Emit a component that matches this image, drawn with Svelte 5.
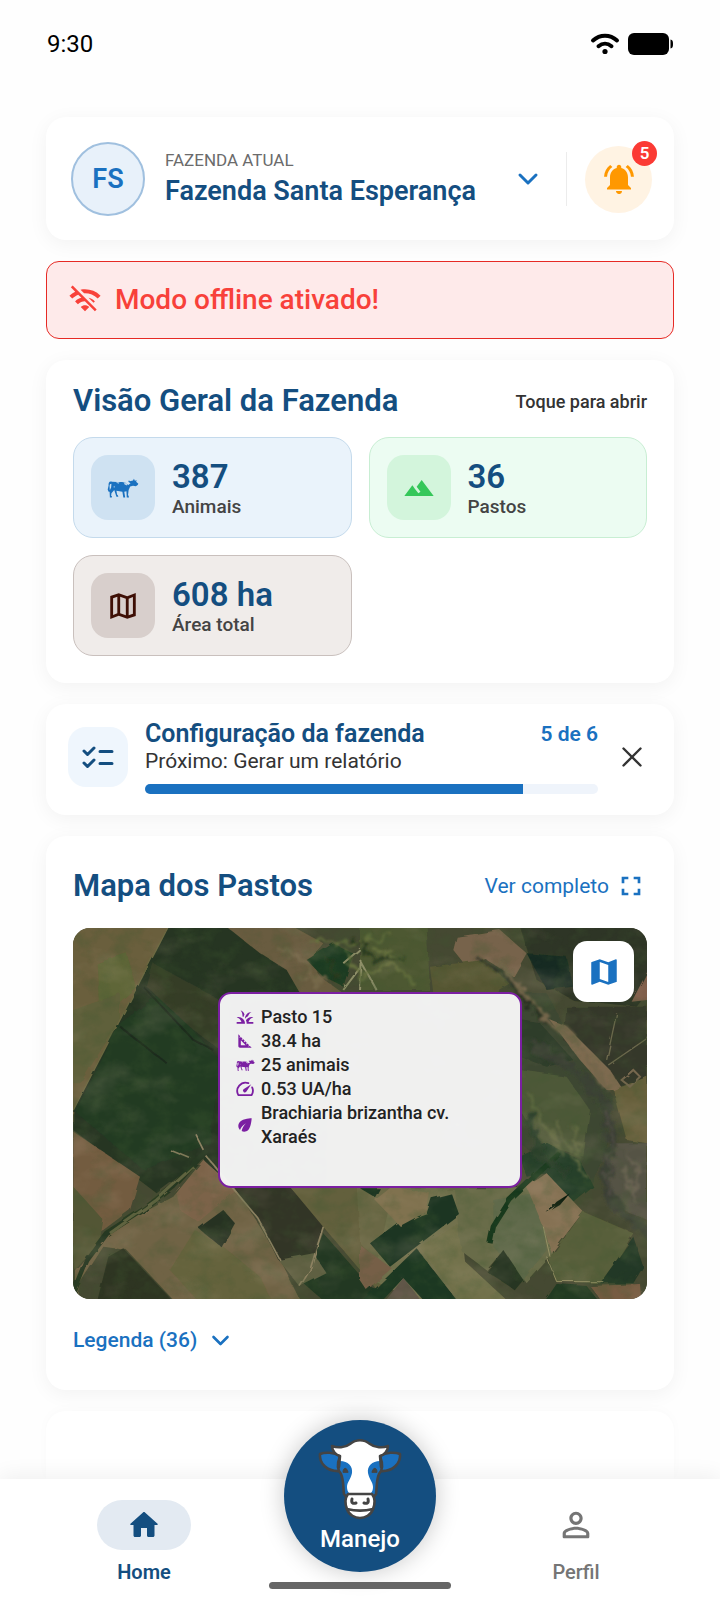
<script>
  const stats = [
    { id: 'animais', value: '387', label: 'Animais' },
    { id: 'pastos', value: '36', label: 'Pastos' },
    { id: 'area', value: '608 ha', label: 'Área total' }
  ];
  const done = 5;
  const total = 6;
  const pasture = [
    { icon: 'grass', text: 'Pasto 15' },
    { icon: 'square', text: '38.4 ha' },
    { icon: 'cow', text: '25 animais' },
    { icon: 'gauge', text: '0.53 UA/ha' },
    { icon: 'leaf', text: 'Brachiaria brizantha cv. Xaraés' }
  ];
</script>

{#snippet cow(w, h)}
  <svg width={w} height={h} viewBox="0 0 100 64" fill="currentColor" aria-hidden="true">
    <path d="M15 12C6 9 3 15 4 24L1 37l3 7 4-1-1-17c0-6 2-8 6-8l-1 12-5 11 1 21h6l1-3-3-2 1-8 9-11 3 10 4 12h6l-1-4-3-3-2-12 19 3 3 18h6l-1-6-2-12 7-2 1 20h7l-1-5-2-2 2-17 5-11 9-2 9 1 6-4 2-4-7-6 2-5-6 2-3-7-3 6-10 2-3-3-2 5 7 5-7 5-9-7-11-2H31z"/>
    <path d="M27 13l8 5 4-4zM53 14l2 7 8 3 1-6zM23 25l-4 4 4 2z" fill="#fff" fill-opacity=".7"/>
  </svg>
{/snippet}

{#snippet chevron()}
  <svg width="24" height="24" viewBox="0 0 24 24" fill="none" stroke="currentColor" stroke-width="3" stroke-linecap="round" stroke-linejoin="round" aria-hidden="true">
    <path d="M4 8l8 8 8-8"/>
  </svg>
{/snippet}

<div class="screen">
  <header class="status">
    <span>9:30</span>
    <div class="status-icons">
      <svg width="30" height="24" viewBox="0 0 30 24" fill="none" stroke="#000" stroke-width="4" stroke-linecap="round" aria-hidden="true">
        <path d="M3 8.500C10 2 20 2 27 8.500M8.500 14.200c4-3.400 9-3.400 13 0"/>
        <circle cx="15" cy="19.500" r="2.600" fill="#000" stroke="none"/>
      </svg>
      <svg width="46" height="24" viewBox="0 0 46 24" aria-hidden="true">
        <rect y="1" width="41" height="22" rx="6"/>
        <path d="M42.500 7.500c2 .4 2.500 1.500 2.500 4.500s-.5 4.100-2.500 4.500z"/>
      </svg>
    </div>
  </header>

  <main>
    <section class="card farm">
      <div class="avatar">FS</div>
      <button class="farm-select">
        <span class="farm-text">
          <small>FAZENDA ATUAL</small>
          <strong>Fazenda Santa Esperança</strong>
        </span>
        {@render chevron()}
      </button>
      <button class="bell" aria-label="Notificações">
        <svg width="36" height="36" viewBox="0 0 24 24" fill="#ff9800" aria-hidden="true">
          <path d="M7.580 4.080L6.150 2.650C3.750 4.480 2.170 7.300 2.030 10.500h2c.15-2.650 1.510-4.970 3.550-6.420zm12.390 6.420h2c-.15-3.200-1.730-6.020-4.120-7.850l-1.420 1.430c2.020 1.450 3.390 3.770 3.540 6.420zM18 11c0-3.070-1.640-5.640-4.500-6.320V4c0-.83-.67-1.500-1.500-1.500s-1.500.67-1.500 1.500v.68C7.630 5.360 6 7.920 6 11v5l-2 2v1h16v-1l-2-2v-5zm-6 11c.14 0 .27-.01.4-.04.65-.14 1.180-.58 1.440-1.180.1-.24.15-.5.15-.78h-4c.01 1.100.9 2 2.010 2z"/>
        </svg>
        <span class="badge">5</span>
      </button>
    </section>

    <div class="offline" role="status">
      <svg width="34" height="34" viewBox="0 0 24 24" fill="currentColor" aria-hidden="true">
        <path d="M22.990 9C19.150 5.160 13.800 3.760 8.840 4.780l2.520 2.520c3.470-.17 6.990 1.050 9.630 3.700l2-2zm-4 4c-1.290-1.290-2.840-2.130-4.490-2.560l3.530 3.530.96-.97zM2 3.050L5.070 6.100C3.600 6.820 2.220 7.780 1 9l1.990 2c1.240-1.240 2.670-2.160 4.200-2.770l2.240 2.240C7.810 10.890 6.270 11.730 5 13v.01L6.990 15c1.360-1.360 3.140-2.040 4.920-2.060L18.980 20l1.270-1.260L3.290 1.790 2 3.050zM9 17l3 3 3-3c-1.650-1.660-4.340-1.660-6 0z"/>
      </svg>
      <span>Modo offline ativado!</span>
    </div>

    <section class="card overview">
      <div class="heading">
        <h2>Visão Geral da Fazenda</h2>
        <span class="hint">Toque para abrir</span>
      </div>
      <div class="tiles">
        {#each stats as s}
          <button class="tile {s.id}">
            <span class="tile-icon">
              {#if s.id === 'animais'}
                {@render cow(32, 20)}
              {:else if s.id === 'pastos'}
                <svg width="32" height="32" viewBox="0 0 24 24" fill="currentColor" aria-hidden="true">
                  <path d="M14 6l-3.750 5 2.850 3.800-1.600 1.200C9.810 13.750 7 10 7 10l-6 8h22L14 6z"/>
                </svg>
              {:else}
                <svg width="34" height="34" viewBox="0 0 24 24" fill="currentColor" aria-hidden="true">
                  <path fill-rule="evenodd" d="M15 5.100L9 3 3 5.020V21.200l6-2.300 6 2.100 6-2.020V2.800zM10 5.470l4 1.400v11.660l-4-1.400zM5 6.460l3-1.010v11.700l-3 1.160zM19 17.540l-3 1.010V6.860l3-1.160z"/>
                </svg>
              {/if}
            </span>
            <span class="tile-text">
              <strong>{s.value}</strong>
              <span>{s.label}</span>
            </span>
          </button>
        {/each}
      </div>
    </section>

    <section class="card setup">
      <div class="setup-icon">
        <svg width="32" height="24" viewBox="0 0 32 24" fill="none" stroke="#144e80" stroke-width="3" stroke-linecap="round" stroke-linejoin="round" aria-hidden="true">
          <path d="M2 6l3.500 3.500L12 3M2 18l3.500 3.500L12 15M18 6.500h12M18 18.500h12"/>
        </svg>
      </div>
      <div class="setup-body">
        <div class="setup-head">
          <h3>Configuração da fazenda</h3>
          <span>{done} de {total}</span>
        </div>
        <p>Próximo: Gerar um relatório</p>
        <div class="track" role="progressbar" aria-label="Configuração da fazenda" aria-valuenow={done} aria-valuemin="0" aria-valuemax={total}>
          <div class="fill" style="width: {(done / total) * 100}%"></div>
        </div>
      </div>
      <button class="close" aria-label="Fechar">
        <svg width="20" height="20" viewBox="0 0 20 20" stroke="#333" stroke-width="2.400" stroke-linecap="round" aria-hidden="true">
          <path d="M1.500 1.500l17 17M18.500 1.500l-17 17"/>
        </svg>
      </button>
    </section>

    <section class="card map-card">
      <div class="heading">
        <h2>Mapa dos Pastos</h2>
        <button class="link">
          Ver completo
          <svg width="32" height="32" viewBox="0 0 24 24" fill="currentColor" aria-hidden="true">
            <path d="M7 14H5v5h5v-2H7v-3zm-2-4h2V7h3V5H5v5zm12 7h-3v2h5v-5h-2v3zM14 5v2h3v3h2V5h-5z"/>
          </svg>
        </button>
      </div>

      <div class="map">
        <svg class="terrain" viewBox="0 0 574 371" preserveAspectRatio="xMidYMid slice" aria-hidden="true">
          <defs>
            <filter id="rough" x="0" y="0" width="100%" height="100%">
              <feTurbulence type="fractalNoise" baseFrequency=".06" numOctaves="3" seed="4" result="n"/>
              <feDisplacementMap in="SourceGraphic" in2="n" scale="4"/>
              <feGaussianBlur stdDeviation=".5"/>
            </filter>
            <filter id="wild" x="-10%" y="-10%" width="120%" height="120%">
              <feTurbulence type="fractalNoise" baseFrequency=".09" numOctaves="4" seed="9" result="n"/>
              <feDisplacementMap in="SourceGraphic" in2="n" scale="18" xChannelSelector="R" yChannelSelector="G"/>
              <feGaussianBlur stdDeviation=".8"/>
            </filter>
            <filter id="mottle" x="0" y="0" width="100%" height="100%">
              <feTurbulence type="fractalNoise" baseFrequency=".05 .06" numOctaves="5" seed="12"/>
              <feColorMatrix values="0 0 0 0 .05  0 0 0 0 .1  0 0 0 0 .03  2.600 0 0 0 -1.150"/>
            </filter>
            <filter id="glow" x="0" y="0" width="100%" height="100%">
              <feTurbulence type="fractalNoise" baseFrequency=".02 .03" numOctaves="4" seed="31"/>
              <feColorMatrix values="0 0 0 0 .62  0 0 0 0 .46  0 0 0 0 .34  0 2.200 0 0 -1.050"/>
            </filter>
          </defs>
          <rect width="574" height="371" fill="#474b2e"/>
          <g filter="url(#rough)">
            <rect width="574" height="371" fill="#454930"/>
            <!-- west side fields -->
            <g transform="translate(-13 -18) scale(.3333)">
              <path d="M20 40H330L190 350 40 610H20z" fill="#6b5f3c"/>
              <path d="M110 160L200 130 230 230 120 330z" fill="#5e6638"/>
              <path d="M40 300L180 250 180 330 60 520H40z" fill="#5f613a"/>
              <path d="M325 50H510L590 120 700 170 800 250V840H480L430 745 290 850 40 660V600z" fill="#263523"/>
              <path d="M180 340L45 605 250 780 450 700 480 450 300 250z" fill="#223a24"/>
              <path d="M280 160L480 270V420L400 360 260 230z" fill="#343c28"/>
              <path d="M500 50H700L790 100 750 150 780 200 850 250H720L680 180 600 130z" fill="#695c3f"/>
              <path d="M740 150L820 100 880 130 850 230 790 200z" fill="#1c3b20"/>
              <path d="M40 665L240 800 210 900 130 960 40 1000z" fill="#735c40"/>
              <path d="M40 830L130 930 120 990 40 1080z" fill="#525734"/>
              <path d="M430 750L530 840 600 950 660 1050 720 1170H340L200 1020 130 1010 60 1120 45 1180V1080L150 960 340 860z" fill="#706344"/>
              <path d="M430 750L530 840 415 935 360 900 350 850z" fill="#7c6449"/>
              <path d="M190 1015L345 1180H110L145 1040z" fill="#2d3624"/>
              <path d="M405 960L490 1010 600 1100 640 1180H420L330 1080z" fill="#65633e"/>
              <path d="M490 900L525 940 485 1012 415 955z" fill="#253223"/>
              <path d="M520 830H690L790 950 740 1080 655 1050 590 920z" fill="#323627"/>
              <path d="M690 830H900L960 870V1000L930 1010 960 1080V1150L790 950z" fill="#64603c"/>
              <path d="M790 970L930 1130 960 1140V1180H800L730 1120z" fill="#203822"/>
              <path d="M655 1050L760 1030 800 1090 720 1130z" fill="#5e6042"/>
              <path d="M40 1150L80 1050 140 970 250 900 340 830 440 720" fill="none" stroke="#283820" stroke-width="17"/>
              <path d="M150 970L290 870 400 770" fill="none" stroke="#60633f" stroke-width="9"/>
              <path d="M40 600L325 50" fill="none" stroke="#6b6841" stroke-width="4"/>
              <path d="M440 740L590 920 660 1050M790 950L750 1080 720 1130M330 720L390 745M405 670L430 720" fill="none" stroke="#8b8060" stroke-width="5"/>
              <path d="M180 350L320 460M255 235L400 390 460 420" fill="none" stroke="#1d2c1d" stroke-width="6"/>
              <path d="M850 240L910 160 950 240M850 160L920 100" fill="none" stroke="#90906b" stroke-width="6"/>
            </g>
            <!-- east side fields -->
            <g transform="translate(287 -18) scale(.3333)">
              <path d="M0 50H200L210 240H0z" fill="#4d5833"/>
              <path d="M290 80L420 60 500 130 460 200 380 150 320 170 280 120z" fill="#77644b"/>
              <path d="M210 170L370 150 450 220 400 250H220z" fill="#555733"/>
              <path d="M480 50H862V250L830 290 640 270 530 210z" fill="#2e3626"/>
              <path d="M500 130L620 140 640 230 560 240z" fill="#172c20"/>
              <path d="M862 185V270L815 275z" fill="#805f4b"/>
              <path d="M480 250H560L640 400 760 560 740 720 690 830 560 760 480 700z" fill="#3d4631"/>
              <path d="M620 290H862V520L760 530 700 450 610 390z" fill="#363829"/>
              <path d="M480 480L620 500 690 600 670 740 540 700 480 600z" fill="#4d5938"/>
              <path d="M480 330L540 340 640 450 560 470 480 440z" fill="#2d3d2a"/>
              <path d="M570 330L620 350 700 430 750 480 790 540 740 540 660 450z" fill="#7d6a50"/>
              <path d="M760 540L862 500V700L800 690z" fill="#665f3a"/>
              <path d="M750 700H862V930L790 900 740 830z" fill="#555245"/>
              <path d="M480 740L560 700 660 750 700 830 640 880 560 790 500 800z" fill="#25402a"/>
              <path d="M-10 830H300V960L200 1000 100 1100 0 1000z" fill="#6a6845"/>
              <path d="M100 830L290 840 330 1180H180L40 1110z" fill="#72714d"/>
              <path d="M285 835H480L550 800 600 860 560 950 580 1030 500 1120 430 1020 380 1080 300 1020z" fill="#696c4a"/>
              <path d="M400 870L520 850 550 960 560 1020 490 1110 400 1010z" fill="#606a4b"/>
              <path d="M500 830L560 790 670 905 575 1030 550 950z" fill="#857153"/>
              <path d="M580 1030L670 905 820 970 730 1120 590 1115 565 1040z" fill="#595e3a"/>
              <path d="M180 1010L290 940 310 1050 440 1170H300z" fill="#707048"/>
              <path d="M30 1000L110 940 200 910 215 865 275 850 297 912 90 1070z" fill="#1c3622"/>
              <path d="M45 870L95 830 210 850 200 905 120 948z" fill="#807250"/>
              <path d="M0 1180L170 1015 290 1170H190L130 1105 60 1180z" fill="#1e3723"/>
              <path d="M70 1180L130 1105 190 1180z" fill="#5f5546"/>
              <path d="M0 1005L95 1075 20 1140 0 1110z" fill="#765f47"/>
              <path d="M0 835H60L45 862z" fill="#1c3520"/>
              <path d="M430 1020L490 1110 465 1140 380 1085z" fill="#273622"/>
              <path d="M820 980L850 1070 820 1120H720z" fill="#223825"/>
              <path d="M550 1180L590 1122 680 1128 720 1180z" fill="#203a23"/>
              <path d="M690 1128L840 1122 845 1180H730z" fill="#775c43"/>
              <path d="M560 908L590 875 630 850 600 885z" fill="#0d1d10"/>
              <path d="M390 1000L400 950 450 870 540 785 600 730" fill="none" stroke="#19371b" stroke-width="16"/>
              <path d="M560 1040L590 1115H730M550 950L570 1040" fill="none" stroke="#989366" stroke-width="3"/>
              <path d="M745 465L862 385M740 450L770 310" fill="none" stroke="#6c694d" stroke-width="4"/>
              <path d="M0 150L50 240M5 160L0 240" fill="none" stroke="#90906b" stroke-width="6"/>
              <path d="M785 510L820 480 840 500 810 530z" fill="none" stroke="#77684f" stroke-width="6"/>
            </g>
          </g>
          <!-- river bed and its woods -->
          <g filter="url(#wild)" fill="none" stroke-linecap="round">
            <path d="M428 36C445 60 462 85 482 96S520 135 532 160" stroke="#74664c" stroke-width="5"/>
            <path d="M405 33C430 35 440 65 470 92" stroke="#262f23" stroke-width="3"/>
            <path d="M465 120C500 140 540 165 538 205S525 262 545 280 574 300 576 310" stroke="#3b3f36" stroke-width="10"/>
            <path d="M533 180C545 205 530 240 537 268" stroke="#4e4b43" stroke-width="3"/>
            <path d="M455 165l15 30 20 30M480 195l20 30 10 25M500 200l8 30" stroke="#626b43" stroke-width="3"/>
            <path d="M458 190l8 40 26 14" stroke="#2a4029" stroke-width="7"/>
            <path d="M270 25l20 25 30-15 20 20M240 12l35 5 40-8M300 20l30 12" stroke="#65703d" stroke-width="3"/>
            <path d="M280 10l20 20 30 0M255 30l10 20" stroke="#27381f" stroke-width="3"/>
            <path d="M205 20l30 15 10 25M225 50l25 0" stroke="#75674a" stroke-width="4"/>
            <path d="M555 225l12 20-8 20M550 240l14 36" stroke="#6a6453" stroke-width="3"/>
          </g>
          <rect width="574" height="371" filter="url(#mottle)" opacity=".3"/>
          <rect width="574" height="371" filter="url(#glow)" opacity=".18"/>
        </svg>

        <button class="layers" aria-label="Camadas do mapa">
          <svg width="34" height="34" viewBox="0 0 24 24" fill="#1a71c0" aria-hidden="true">
            <path fill-rule="evenodd" d="M20.500 3l-.16.030L15 5.100 9 3 3.360 4.900c-.21.070-.36.250-.36.480V20.500c0 .28.220.5.5.5l.16-.03L9 18.900l6 2.100 5.640-1.900c.21-.07.36-.25.36-.48V3.500c0-.28-.22-.5-.5-.5zM15 19l-6-2.110V5l6 2.110z"/>
          </svg>
        </button>

        <ul class="popup">
          {#each pasture as p}
            <li>
              <span class="row-icon">
                {#if p.icon === 'grass'}
                  <svg width="20" height="20" viewBox="0 0 24 24" fill="currentColor" aria-hidden="true">
                    <path d="M12 20H2v-2h5.750C7.020 15.190 4.810 12.990 2 12.260 2.640 12.100 3.310 12 4 12c4.420 0 8 3.580 8 8zm10-7.740c-.64-.16-1.310-.26-2-.26-2.930 0-5.480 1.580-6.880 3.930.29.66.53 1.350.67 2.070.13.650.2 1.320.2 2h8v-2h-5.750c.74-2.810 2.950-5.010 5.760-5.740zM15.640 11.020c.78-2.090 2.230-3.840 4.090-5C15.440 6.160 12 9.670 12 14v.02c.95-1.270 2.200-2.300 3.640-3zM11.420 8.850C10.580 6.660 8.880 4.890 6.700 4 8.140 5.860 9 8.180 9 10.710c0 .21-.03.410-.04.610.43.240.83.520 1.220.82.210-1.180.65-2.290 1.240-3.290z"/>
                  </svg>
                {:else if p.icon === 'square'}
                  <svg width="20" height="20" viewBox="0 0 24 24" fill="currentColor" aria-hidden="true">
                    <path fill-rule="evenodd" d="M17.660 17.660l-1.060 1.060-.71-.71 1.060-1.060-1.940-1.940-1.060 1.060-.71-.71 1.060-1.060-1.940-1.940-1.060 1.060-.71-.71 1.060-1.060L9.700 9.700l-1.060 1.060-.71-.71 1.060-1.060-1.940-1.940-1.060 1.060-.71-.71 1.060-1.060L4 4v14c0 1.100.9 2 2 2h14zM7 17v-5.760L12.760 17z"/>
                  </svg>
                {:else if p.icon === 'cow'}
                  {@render cow(19, 12)}
                {:else if p.icon === 'gauge'}
                  <svg width="20" height="20" viewBox="0 0 24 24" fill="none" stroke="currentColor" stroke-width="2.200" stroke-linecap="round" stroke-linejoin="round" aria-hidden="true">
                    <path d="M16 5a10 10 0 0 0-12 14.300h16a10 10 0 0 0 .6-9.300"/>
                    <path d="M19.500 6.300l-9.300 6a2.200 2.200 0 1 0 3.300 3z" fill="currentColor" stroke="none"/>
                  </svg>
                {:else}
                  <svg width="20" height="20" viewBox="0 0 24 24" fill="currentColor" aria-hidden="true">
                    <path d="M6.050 8.050c-2.730 2.730-2.730 7.150-.02 9.880 1.470-3.400 4.090-6.240 7.360-7.930-2.770 2.340-4.710 5.610-5.390 9.320 2.600 1.230 5.800.78 7.950-1.370C19.430 14.470 20 4 20 4S9.530 4.570 6.050 8.050z"/>
                  </svg>
                {/if}
              </span>
              <span>{p.text}</span>
            </li>
          {/each}
        </ul>
      </div>

      <button class="legend">
        Legenda (36)
        {@render chevron()}
      </button>
    </section>

    <section class="card next"></section>
  </main>

  <nav>
    <a class="tab active" href="#home">
      <span class="pill">
        <svg width="36" height="36" viewBox="0 0 24 24" fill="currentColor" aria-hidden="true">
          <path d="M10 19v-5h4v5c0 .55.450 1 1 1h3c.55 0 1-.45 1-1v-7h1.700c.46 0 .68-.57.33-.87L12.670 3.600c-.38-.34-.96-.34-1.340 0l-8.360 7.530c-.34.300-.13.870.33.870H5v7c0 .55.450 1 1 1h3c.55 0 1-.45 1-1z"/>
        </svg>
      </span>
      Home
    </a>
    <a class="manejo" href="#manejo">
      <svg width="88" height="82" viewBox="0 0 88 82" stroke="#444" stroke-width="2.600" stroke-linejoin="round" stroke-linecap="round" aria-hidden="true">
        <path d="M24 17C18 13 9 13 4 15c-1 9 7 18 20 17zM64 17c6-4 15-4 20-2 1 9-7 18-20 17z" fill="#1a71c0"/>
        <path d="M24 17c-3 8-3 14 1 18 3 7 2 14 3 20l4 5h24l4-5c1-6 0-13 3-20 4-4 4-10 1-18z" fill="#1a71c0"/>
        <path d="M24 16c-4-1-8-4-8-9 5 2 13 2 18-2 6-5 14-5 20 0 5 4 13 4 18 2 0 5-4 8-8 9v6c-8 0-13 5-12 12 1 6 5 9 5 14 0 3-1 5-2 6H33c-1-1-2-3-2-6 0-5 4-8 5-14 1-7-4-12-12-12z" fill="#fff" stroke="none"/>
        <path d="M23 28l1-11c-4-1-8-5-8-10 5 2 13 2 18-2 6-5 14-5 20 0 5 4 13 4 18 2 0 5-4 9-8 10l1 11" fill="none"/>
        <path d="M27 33c0-5 4-5 5 0zM56 33c1-5 5-5 5 0z" fill="#444" stroke-width="1"/>
        <path d="M31 70c2 6 8 9 13 9s11-3 13-9z" fill="#fff"/>
        <path d="M32 55h24c3 4 3 10 1 15-8 2-18 2-26 0-2-5-2-11 1-15z" fill="#fff"/>
        <path d="M36 60c-1 4 1 5 4 4M52 60c1 4-1 5-4 4" fill="none" stroke-width="3"/>
      </svg>
      Manejo
    </a>
    <a class="tab" href="#perfil">
      <span class="pill">
        <svg width="40" height="40" viewBox="0 0 24 24" fill="currentColor" aria-hidden="true">
          <path d="M12 5.900c1.160 0 2.100.94 2.100 2.100s-.94 2.100-2.100 2.100S9.900 9.160 9.900 8s.94-2.100 2.100-2.100m0 9c2.970 0 6.100 1.460 6.100 2.100v1.100H5.900V17c0-.64 3.130-2.100 6.100-2.100M12 4C9.790 4 8 5.790 8 8s1.790 4 4 4 4-1.790 4-4-1.790-4-4-4zm0 9c-2.670 0-8 1.340-8 4v2c0 .6.400 1 1 1h14c.6 0 1-.4 1-1v-2c0-2.660-5.330-4-8-4z"/>
        </svg>
      </span>
      Perfil
    </a>
    <span class="grip"></span>
  </nav>
</div>

<style>
  :global(body) {
    background: #fefefe;
    font-family: Roboto, "Liberation Sans", sans-serif;
    color: #333;
  }
  button {
    font: inherit;
    color: inherit;
    background: none;
    border: 0;
    padding: 0;
    text-align: left;
    cursor: pointer;
  }
  h2, h3, p, ul { margin: 0; padding: 0; }
  svg { display: block; flex: none; }

  .screen {
    display: flex;
    flex-direction: column;
    min-height: 100vh;
  }
  .status {
    display: flex;
    align-items: center;
    justify-content: space-between;
    height: 88px;
    padding: 0 46px 0 47px;
    font-size: 24px;
    color: #000;
  }
  .status-icons { display: flex; gap: 8px; }

  main {
    flex: 1;
    display: flex;
    flex-direction: column;
    gap: 21px;
    padding: 29px 46px 0;
  }
  .card {
    background: #fff;
    border-radius: 20px;
    box-shadow: 0 4px 20px rgba(0, 0, 0, .05);
  }

  .farm {
    display: flex;
    align-items: center;
    padding: 25px 22px 24px 25px;
  }
  .avatar {
    box-sizing: border-box;
    width: 74px;
    height: 74px;
    border: 2px solid #a0c0df;
    border-radius: 50%;
    background: #e8f1fa;
    color: #1a71c0;
    font-size: 27px;
    font-weight: 600;
    line-height: 70px;
    text-align: center;
  }
  .farm-select {
    flex: 1;
    display: flex;
    align-items: center;
    justify-content: space-between;
    margin-left: 20px;
    padding-right: 27px;
    color: #1a71c0;
  }
  .farm-text { display: flex; flex-direction: column; }
  .farm-text small {
    font-size: 17px;
    line-height: 24px;
    color: #6b6b6b;
  }
  .farm-text strong {
    font-size: 27px;
    font-weight: 600;
    line-height: 38px;
    color: #144e80;
  }
  .bell {
    position: relative;
    display: grid;
    place-items: center;
    width: 67px;
    height: 67px;
    margin-left: 18px;
    border-radius: 50%;
    background: #fff3e3;
  }
  .bell::before {
    content: "";
    position: absolute;
    left: -19px;
    top: 6px;
    width: 1px;
    height: 54px;
    background: #ececec;
  }
  .badge {
    position: absolute;
    top: -5px;
    right: -5px;
    width: 25px;
    height: 25px;
    border-radius: 50%;
    background: #fb3a34;
    color: #fff;
    font-size: 17px;
    font-weight: 600;
    line-height: 25px;
    text-align: center;
  }

  .offline {
    display: flex;
    align-items: center;
    gap: 13px;
    padding: 21px;
    border: 1px solid #e62a25;
    border-radius: 13px;
    background: #feeaea;
    color: #f8413a;
    font-size: 28px;
    font-weight: 500;
    line-height: 34px;
  }

  .heading {
    display: flex;
    align-items: center;
    justify-content: space-between;
  }
  h2 {
    font-size: 31px;
    font-weight: 600;
    line-height: 38px;
    color: #144e80;
  }
  .hint { font-size: 18px; font-weight: 500; }

  .overview { padding: 22px 27px 27px; }
  .tiles {
    display: grid;
    grid-template-columns: 1fr 1fr;
    gap: 17px;
    margin-top: 17px;
  }
  .tile {
    display: flex;
    align-items: center;
    gap: 17px;
    padding: 17px;
    border: 1px solid;
    border-radius: 20px;
  }
  .tile-icon {
    display: grid;
    place-items: center;
    width: 64px;
    height: 65px;
    border-radius: 17px;
  }
  .tile-text {
    display: flex;
    flex-direction: column;
    padding-top: 5px;
    font-size: 19px;
    font-weight: 500;
    line-height: 26px;
    color: #444;
  }
  .tile-text strong {
    font-size: 33px;
    font-weight: 600;
    line-height: 34px;
    color: #144e80;
  }
  .animais { background: #eaf3fb; border-color: #c4daec; }
  .animais .tile-icon { background: #cfe2f2; color: #1a71c0; }
  .pastos { background: #ecfcf2; border-color: #c8eed3; }
  .pastos .tile-icon { background: #d3f5dc; color: #35c75a; }
  .area { background: #f0ecea; border-color: #c9c0bd; }
  .area .tile-icon { background: #d8cfcc; color: #3e0f05; }

  .setup {
    display: flex;
    align-items: center;
    padding: 15px 27px 21px 22px;
  }
  .setup-icon {
    display: grid;
    place-items: center;
    width: 60px;
    height: 60px;
    border-radius: 18px;
    background: #eff6fd;
  }
  .setup-body { flex: 1; margin: 0 19px 0 17px; }
  .setup-head {
    display: flex;
    align-items: center;
    justify-content: space-between;
    line-height: 30px;
  }
  h3 { font-size: 25px; font-weight: 600; color: #144e80; }
  .setup-head span { font-size: 21px; font-weight: 600; color: #1a71c0; }
  .setup p { font-size: 21px; line-height: 24px; }
  .track {
    height: 10px;
    margin-top: 11px;
    border-radius: 5px;
    background: #eff4fb;
    overflow: hidden;
  }
  .fill { height: 100%; background: #1a71c0; }
  .close { padding: 5px; }

  .map-card { padding: 31px 27px 36px; }
  .link, .legend {
    display: flex;
    align-items: center;
    font-size: 21px;
    line-height: 28px;
    color: #1a71c0;
  }
  .link { gap: 6px; }
  .legend { gap: 13px; margin-top: 27px; font-weight: 500; }
  .legend svg { width: 21px; height: 21px; }
  .map {
    position: relative;
    height: 371px;
    margin-top: 23px;
    border-radius: 17px;
    overflow: hidden;
  }
  .terrain { position: absolute; inset: 0; width: 100%; height: 100%; }
  .layers {
    position: absolute;
    top: 13px;
    right: 13px;
    display: grid;
    place-items: center;
    width: 61px;
    height: 61px;
    border-radius: 14px;
    background: #fff;
  }
  .popup {
    position: absolute;
    top: 64px;
    left: 145px;
    box-sizing: border-box;
    width: 304px;
    height: 196px;
    padding: 11px 50px 11px 15px;
    border: 2px solid #7b1fa2;
    border-radius: 13px;
    background: rgba(246, 246, 246, .97);
    list-style: none;
  }
  .popup li {
    display: flex;
    align-items: center;
    gap: 6px;
    font-size: 18px;
    font-weight: 500;
    line-height: 24px;
    color: #222;
  }
  .row-icon {
    flex: none;
    display: grid;
    place-items: center;
    width: 20px;
    color: #7b1fa2;
  }
  .next {
    height: 68px;
    border-radius: 20px 20px 0 0;
    box-shadow: 0 -2px 12px rgba(0, 0, 0, .02);
  }

  nav {
    position: relative;
    display: grid;
    grid-template-columns: 2fr 1fr 2fr;
    justify-items: center;
    align-items: start;
    height: 106px;
    padding-top: 21px;
    background: #fff;
    box-shadow: 0 -4px 20px rgba(0, 0, 0, .06);
  }
  .tab {
    display: flex;
    flex-direction: column;
    align-items: center;
    gap: 8px;
    font-size: 20px;
    font-weight: 500;
    line-height: 28px;
    color: #757575;
    text-decoration: none;
  }
  .pill {
    display: grid;
    place-items: center;
    width: 94px;
    height: 50px;
    border-radius: 25px;
  }
  .active { color: #144e80; font-weight: 600; }
  .active .pill { background: #e3eaf2; }
  .manejo {
    box-sizing: border-box;
    display: flex;
    flex-direction: column;
    align-items: center;
    gap: 3px;
    width: 152px;
    height: 152px;
    margin: -80px -4px 0;
    padding-top: 19px;
    border-radius: 50%;
    background: #144e80;
    box-shadow: 0 0 24px rgba(0, 0, 0, .22);
    color: #fff;
    font-size: 24px;
    font-weight: 500;
    line-height: 30px;
    text-decoration: none;
  }
  .grip {
    position: absolute;
    bottom: 17px;
    left: 50%;
    width: 182px;
    height: 7px;
    margin-left: -91px;
    border-radius: 4px;
    background: #666;
  }
</style>
